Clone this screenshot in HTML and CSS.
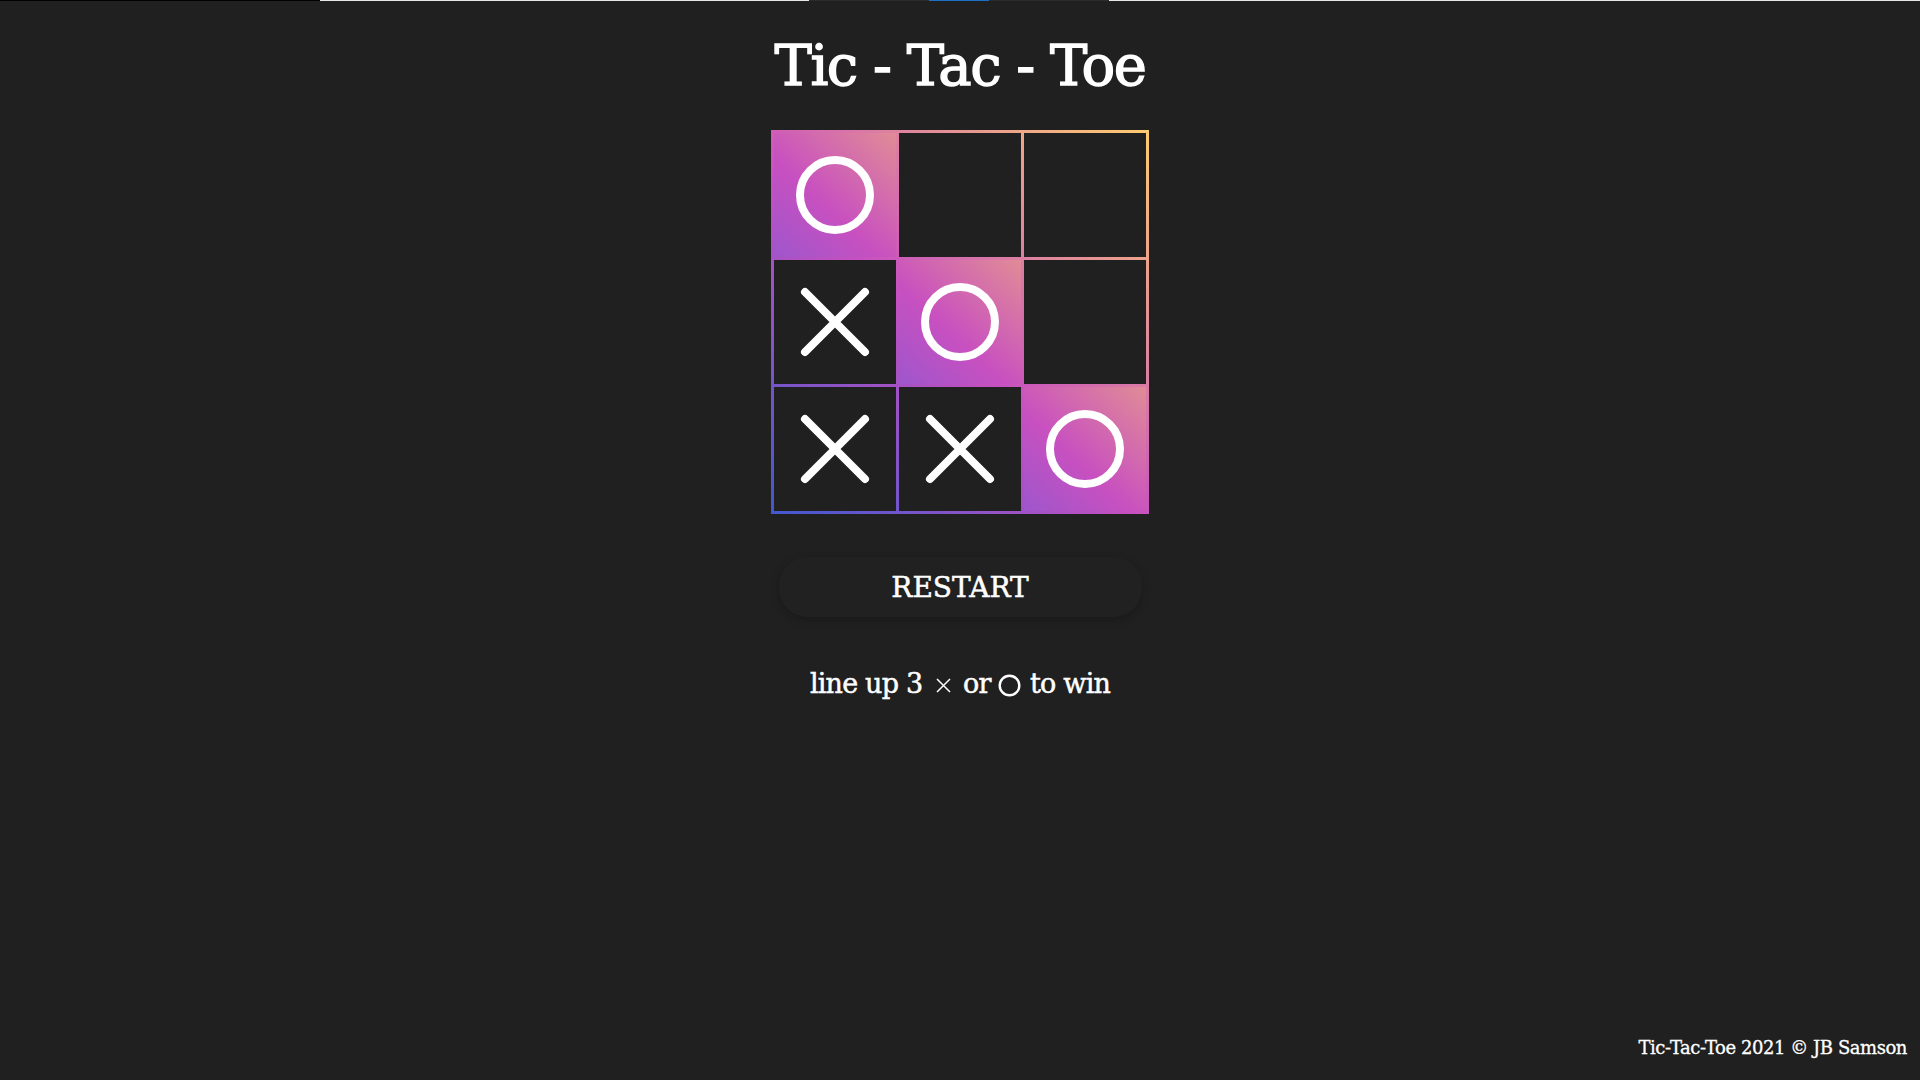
FILE: index.html
```html
<!DOCTYPE html>
<html lang="en">
<head>
<meta charset="utf-8">
<title>Tic-Tac-Toe</title>
<link rel="stylesheet" href="styles.css">
</head>
<body>
<div class="topline">
  <span class="seg seg-black"></span>
  <span class="seg seg-light1"></span>
  <span class="seg seg-dark1"></span>
  <span class="seg seg-blue"></span>
  <span class="seg seg-dark2"></span>
  <span class="seg seg-light2"></span>
</div>
<div class="page">
  <h1 class="title">Tic - Tac - Toe</h1>
  <div class="board">
    <div class="cell win">
      <svg class="mark" viewBox="0 0 122 124"><circle cx="61" cy="62" r="35" fill="none" stroke="#fff" stroke-width="8"/></svg>
    </div>
    <div class="cell"></div>
    <div class="cell"></div>
    <div class="cell">
      <svg class="mark" viewBox="0 0 122 124"><path d="M31 32 L91 92 M91 32 L31 92" stroke="#fff" stroke-width="8" stroke-linecap="round"/></svg>
    </div>
    <div class="cell win">
      <svg class="mark" viewBox="0 0 122 124"><circle cx="61" cy="62" r="35" fill="none" stroke="#fff" stroke-width="8"/></svg>
    </div>
    <div class="cell"></div>
    <div class="cell">
      <svg class="mark" viewBox="0 0 122 124"><path d="M31 32 L91 92 M91 32 L31 92" stroke="#fff" stroke-width="8" stroke-linecap="round"/></svg>
    </div>
    <div class="cell">
      <svg class="mark" viewBox="0 0 122 124"><path d="M31 32 L91 92 M91 32 L31 92" stroke="#fff" stroke-width="8" stroke-linecap="round"/></svg>
    </div>
    <div class="cell win">
      <svg class="mark" viewBox="0 0 122 124"><circle cx="61" cy="62" r="35" fill="none" stroke="#fff" stroke-width="8"/></svg>
    </div>
  </div>
  <button class="restart">RESTART</button>
  <p class="hint">line up 3 <svg class="hint-x" viewBox="0 0 15 15"><path d="M1 1 L14 14 M14 1 L1 14" stroke="#fff" stroke-width="1.5"/></svg> or <svg class="hint-o" viewBox="0 0 23 23"><circle cx="11.5" cy="11.5" r="9.8" fill="none" stroke="#fff" stroke-width="2.4"/></svg> to win</p>
  <footer class="footer">Tic-Tac-Toe 2021 © JB Samson</footer>
</div>
</body>
</html>
```
FILE: styles.css
```css
html, body {
  margin: 0;
  padding: 0;
  background: #202020;
  color: #fff;
}

body {
  font-family: "DejaVu Serif", "Liberation Serif", serif;
}

.topline {
  display: flex;
  height: 1px;
}

.seg { display: block; height: 1px; }
.seg-black { width: 320px; background: #000; }
.seg-light1 { width: 489px; background: #e8e8e8; }
.seg-dark1 { width: 120px; background: #2c2c2c; }
.seg-blue { width: 60px; background: #1a6fc6; }
.seg-dark2 { width: 120px; background: #2c2c2c; }
.seg-light2 { flex: 1; background: #e8e8e8; }

.page {
  min-height: 1079px;
  display: flex;
  flex-direction: column;
  align-items: center;
}

.title {
  margin: 37px 0 0;
  font-size: 56px;
  line-height: 56px;
  font-weight: normal;
  letter-spacing: -1.5px;
  -webkit-text-stroke: 1.4px #fff;
}

.board {
  margin-top: 36px;
  padding: 3px;
  display: grid;
  grid-template-columns: repeat(3, 122px);
  grid-template-rows: repeat(3, 124px);
  gap: 3px;
  background: linear-gradient(43deg, #4158d0 0%, #c850c0 46%, #ffcc70 100%);
}

.cell {
  background: #202020;
  display: flex;
  align-items: center;
  justify-content: center;
}

.cell.win {
  background: linear-gradient(43deg, #9e56cc 0%, #c850c0 42%, #e08c96 100%);
}

.mark {
  width: 122px;
  height: 124px;
  display: block;
}

.restart {
  margin-top: 43px;
  width: 363px;
  height: 60px;
  border: none;
  border-radius: 28px;
  background: #212121;
  box-shadow: 0 3px 8px rgba(0, 0, 0, 0.22);
  color: #fff;
  font-family: "DejaVu Serif", "Liberation Serif", serif;
  font-size: 28px;
  letter-spacing: 0;
  padding: 0;
  -webkit-text-stroke: 0.5px #fff;
}

.hint {
  margin: 53px 0 0;
  font-size: 27px;
  line-height: 28px;
  letter-spacing: -0.8px;
  -webkit-text-stroke: 0.5px #fff;
}

.hint-x {
  width: 15px;
  height: 15px;
  margin: 0 4px 0 6px;
  vertical-align: 0;
}

.hint-o {
  width: 23px;
  height: 23px;
  margin: 0 1px 0 0;
  vertical-align: -4px;
}

.footer {
  margin-top: auto;
  align-self: stretch;
  text-align: right;
  padding: 0 13px 23px 0;
  font-size: 18px;
  line-height: 18px;
  letter-spacing: -0.45px;
  -webkit-text-stroke: 0.3px #fff;
}
```
